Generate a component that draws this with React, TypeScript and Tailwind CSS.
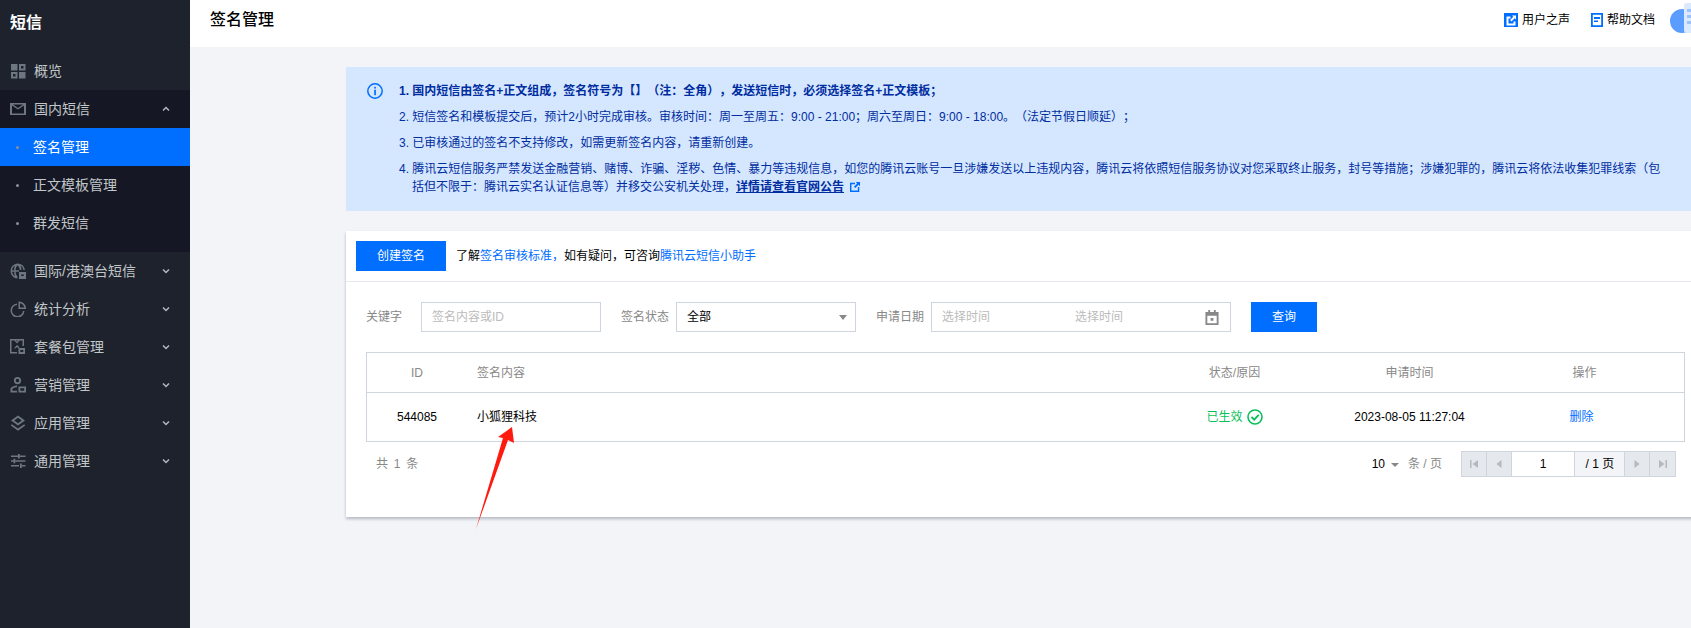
import type { ReactNode } from "react";

const fontStack = '"Liberation Sans", "Noto Sans CJK SC", sans-serif';
const iconFill = "#6e7681";

const navIcons: Record<string, ReactNode> = {
  overview: (
    <>
      <rect x="1" y="1" width="6.5" height="6.5" fill={iconFill} />
      <path fillRule="evenodd" d="M9 1h6.5v6.5H9zM11 3v2.5h2.5V3z" fill={iconFill} />
      <path fillRule="evenodd" d="M1 9h6.5v6.5H1zM3 11v2.5h2.5V11z" fill={iconFill} />
      <rect x="9" y="9" width="6.5" height="6.5" fill={iconFill} />
    </>
  ),
  mail: (
    <path
      fillRule="evenodd"
      d="M0 2h16v12H0zM2 4.6V12.5h12V4.6L8 8.6zM3 3.5l5 3.4 5-3.4z"
      fill={iconFill}
    />
  ),
  globe: (
    <>
      <path
        d="M7.500 0.500a7.500 7.500 0 0 0-7 7.500 7.500 7.500 0 0 0 7 7.500V13.500c-1-1-1.800-2.800-1.900-4.800H9v-1.400H5.600C5.700 5 6.500 3.200 7.500 2.200 8.500 3.200 9.700 5 9.800 7h1.600a8 8 0 0 0-1-4.500A6 6 0 0 1 13.500 7H15A7.500 7.500 0 0 0 7.500 0.500zM4.200 7.300H2a6 6 0 0 1 3-4.700A9 9 0 0 0 4.200 7.300zM4.200 8.700A9 9 0 0 0 5 13.400 6 6 0 0 1 2 8.700z"
        fill={iconFill}
      />
      <path fillRule="evenodd" d="M9 9h7v7H9zM11.200 11.500v1.600h2.600v-1.600z" fill={iconFill} />
    </>
  ),
  pie: (
    <>
      <path d="M7 2.500A7 7 0 1 0 14.500 10H13a5.500 5.500 0 1 1-6-6z" fill={iconFill} />
      <path
        fillRule="evenodd"
        d="M8.500 0.500A7 7 0 0 1 16 8H8.500zM10 2.200V6.500h4.300A5.500 5.500 0 0 0 10 2.200z"
        fill={iconFill}
      />
    </>
  ),
  pack: (
    <>
      <path
        fillRule="evenodd"
        d="M0 0h14v7h-1.500V1.500H9.700L7 4.500 4.300 1.500H1.500v11.500H7V14.500H0zM6 1.500L7 2.700 8 1.500zM7 6l-3 3.200h1.900L7 8l1.100 1h1V7.700z"
        fill={iconFill}
      />
      <path fillRule="evenodd" d="M8.500 9h6.500v6H8.500zM10.300 11v2h3v-2z" fill={iconFill} />
    </>
  ),
  user: (
    <>
      <path
        fillRule="evenodd"
        d="M7.500 0a3.600 3.600 0 1 1 0 7.200 3.600 3.600 0 0 1 0-7.200zM7.500 1.800a1.800 1.800 0 1 0 0 3.600 1.800 1.800 0 0 0 0-3.600z"
        fill={iconFill}
      />
      <path d="M0.500 15.500V12.500C0.500 10.500 2.500 9 7 8.500v1.700c-3 .3-4.700 1.200-4.700 2.400v1.100H7v1.800z" fill={iconFill} />
      <path fillRule="evenodd" d="M8.500 9.500h7.500v6H8.500zM10.300 11.300v2.400h3.900v-2.400z" fill={iconFill} />
    </>
  ),
  layers: (
    <>
      <path fillRule="evenodd" d="M8 0.500l7 5-7 5-7-5zM8 2.800L4.200 5.500 8 8.200l3.800-2.700z" fill={iconFill} />
      <path d="M1.800 9.200L8 13.600l6.200-4.400 1 1.300L8 15.700 0.800 10.500z" fill={iconFill} />
    </>
  ),
  sliders: (
    <path
      d="M1 2.500h7v1.500H1zM10 2.500h5.500v1.500H10zM8 1h1.800v4.500H8zM1 7.300h2.500v1.500H1zM5.500 7.300h10v1.500h-10zM3.500 5.800h1.800v4.500H3.500zM1 12.100h8v1.500H1zM12 12.100h3.500v1.500H12zM10 10.600h1.800v4.500H10z"
      fill={iconFill}
    />
  ),
};

function NavIcon({ name }: { name: string }) {
  return (
    <svg viewBox="0 0 16 16" className="size-4 shrink-0">
      {navIcons[name]}
    </svg>
  );
}

function Chevron({ up = false }: { up?: boolean }) {
  return (
    <svg viewBox="0 0 8 6" className="absolute left-[162px] top-[16px] h-[6px] w-[8px]">
      <polyline
        points={up ? "1,4.500 4,1.500 7,4.500" : "1,1.500 4,4.500 7,1.500"}
        fill="none"
        stroke="#b4b8bd"
        strokeWidth="1.500"
      />
    </svg>
  );
}

function NavRow({ icon, label, open }: { icon: string; label: string; open?: boolean }) {
  return (
    <div className="relative flex h-[38px] items-center gap-[8px] pl-[10px] text-[14px] text-[#c1c6c8]">
      <NavIcon name={icon} />
      <span>{label}</span>
      {open !== undefined && <Chevron up={open} />}
    </div>
  );
}

function SubRow({ label, active = false }: { label: string; active?: boolean }) {
  return (
    <div
      className={
        active
          ? "flex h-[38px] items-center pl-[16px] text-[14px] text-white bg-[#006eff]"
          : "flex h-[38px] items-center pl-[16px] text-[14px] text-[#c1c6c8]"
      }
    >
      <span className="mr-[14px] size-[3px] rounded-full bg-[#8a8f99]" />
      {label}
    </div>
  );
}

function Sidebar() {
  return (
    <aside className="w-[190px] shrink-0 bg-[#1e222d]">
      <div className="flex h-[52px] items-start pl-[10px] pt-[11px] text-[16px] leading-[24px] font-bold text-white">
        短信
      </div>
      <NavRow icon="overview" label="概览" />
      <div className="bg-[#151824] pb-[10px]">
        <NavRow icon="mail" label="国内短信" open />
        <SubRow label="签名管理" active />
        <SubRow label="正文模板管理" />
        <SubRow label="群发短信" />
      </div>
      <NavRow icon="globe" label="国际/港澳台短信" open={false} />
      <NavRow icon="pie" label="统计分析" open={false} />
      <NavRow icon="pack" label="套餐包管理" open={false} />
      <NavRow icon="user" label="营销管理" open={false} />
      <NavRow icon="layers" label="应用管理" open={false} />
      <NavRow icon="sliders" label="通用管理" open={false} />
    </aside>
  );
}

function TopBar() {
  return (
    <header className="relative flex h-[47px] shrink-0 items-center bg-white pl-[20px]">
      <h1 className="mb-[7px] text-[16px] leading-[24px] font-medium text-black">签名管理</h1>
      <div className="ml-auto mb-[7px] flex items-center pr-[36px] text-[12px] text-black">
        <svg viewBox="0 0 14 14" className="mr-[4px] size-[14px]">
          <rect width="14" height="14" fill="#006eff" />
          <path d="M2.500 3.500h4v2h-2v5h5v-2h2v4h-9z" fill="#fff" />
          <path d="M8 2.500h4v4l-1.300-1.300-3.200 3.200-1.400-1.400 3.200-3.200z" fill="#fff" />
        </svg>
        <span>用户之声</span>
        <svg viewBox="0 0 12 14" className="ml-[21px] mr-[4px] h-[14px] w-[12px]">
          <path fillRule="evenodd" d="M0 0h12v14H0zM1.800 1.800v10.400h8.400V1.800z" fill="#006eff" />
          <path d="M3 4h6v2H3zM3 7.500h4v1.500H3z" fill="#006eff" />
        </svg>
        <span>帮助文档</span>
      </div>
      {/* avatar, cut by the window edge */}
      <div className="absolute left-[1480px] top-[9px] size-[24px] rounded-full bg-[#5b9cff]" />
      <div className="absolute left-[1494px] top-[3px] flex h-[30px] w-[20px] flex-col gap-[3px] rounded-[3px] bg-[#dbe9ff] pt-[6px] pl-[3px]">
        <span className="h-[3px] w-[10px] bg-[#9cc2fb]" />
        <span className="h-[3px] w-[10px] bg-[#9cc2fb]" />
        <span className="h-[3px] w-[10px] bg-[#9cc2fb]" />
      </div>
    </header>
  );
}

function Notice() {
  return (
    <section className="flex bg-[#d5e7ff] py-[15px] pl-[21px] text-[12px] leading-[18px] text-[#002da0] [text-spacing-trim:space-all]">
      <svg viewBox="0 0 16 16" className="mt-px mr-[16px] size-4 shrink-0">
        <circle cx="8" cy="8" r="7.200" fill="none" stroke="#006eff" strokeWidth="1.500" />
        <rect x="7.200" y="3.800" width="1.700" height="1.700" fill="#006eff" />
        <rect x="7.200" y="6.700" width="1.700" height="5.500" fill="#006eff" />
      </svg>
      <div className="flex flex-col gap-[8px] whitespace-nowrap">
        <p className="font-bold">
          1. 国内短信由签名+正文组成，签名符号为【】（注：全角），发送短信时，必须选择签名+正文模板；
        </p>
        <p>
          2. 短信签名和模板提交后，预计2小时完成审核。审核时间：周一至周五：9:00 - 21:00；周六至周日：9:00 -
          18:00。（法定节假日顺延）；
        </p>
        <p>3. 已审核通过的签名不支持修改，如需更新签名内容，请重新创建。</p>
        <div>
          <p>
            4. 腾讯云短信服务严禁发送金融营销、赌博、诈骗、淫秽、色情、暴力等违规信息，如您的腾讯云账号一旦涉嫌发送以上违规内容，腾讯云将依照短信服务协议对您采取终止服务，封号等措施；涉嫌犯罪的，腾讯云将依法收集犯罪线索（包
          </p>
          <p className="flex items-center pl-[13px]">
            括但不限于：腾讯云实名认证信息等）并移交公安机关处理，
            <span className="font-bold underline">详情请查看官网公告</span>
            <svg viewBox="0 0 14 14" className="ml-[6px] size-[10px]">
              <path d="M0 1h7v2H2v9h9V7h2v7H0z" fill="#006eff" />
              <path d="M8 0h6v6l-2-2-4.500 4.500-2-2L10 2z" fill="#006eff" />
            </svg>
          </p>
        </div>
      </div>
    </section>
  );
}

const inputBox = "flex h-[30px] items-center border border-[#cfd5de] bg-white text-[12px]";
const filterLabel = "mr-[7px] w-[48px] text-[12px] text-[#888]";

function Filters() {
  return (
    <div className="flex items-center pt-[20px] pl-[20px]">
      <span className={filterLabel}>关键字</span>
      <div className={`${inputBox} mr-[20px] w-[180px] pl-[10px] text-[#bbb]`}>签名内容或ID</div>
      <span className={filterLabel}>签名状态</span>
      <div className={`${inputBox} mr-[20px] w-[180px] justify-between pr-[8px] pl-[10px] text-black`}>
        全部
        <span className="h-0 w-0 border-x-[4px] border-t-[5px] border-x-transparent border-t-[#888]" />
      </div>
      <span className={filterLabel}>申请日期</span>
      <div className={`${inputBox} mr-[20px] w-[300px] pl-[10px] text-[#bbb]`}>
        <span className="w-[133px]">选择时间</span>
        <span>选择时间</span>
        <svg viewBox="0 0 14 16" className="ml-auto mr-[11px] h-[15px] w-[14px]">
          <path
            fillRule="evenodd"
            d="M0 2h3V0h2v2h4V0h2v2h3v14H0zM2 6v8h10V6zM5.500 8.500h3v3h-3z"
            fill="#888"
          />
        </svg>
      </div>
      <button className="h-[30px] w-[66px] bg-[#006eff] text-[12px] text-white">查询</button>
    </div>
  );
}

const tableGrid = "grid grid-cols-[100px_680px_175px_175px_175px_12px] items-center text-[12px]";

function SignTable() {
  return (
    <div className="mt-[20px] ml-[20px] w-[1319px] border border-[#cfd5de]">
      <div className={`${tableGrid} h-[39px] text-[#888]`}>
        <span className="text-center">ID</span>
        <span className="pl-[10px]">签名内容</span>
        <span className="text-center">状态/原因</span>
        <span className="text-center">申请时间</span>
        <span className="text-center">操作</span>
      </div>
      <div className={`${tableGrid} h-[49px] border-t border-[#cfd5de] text-black`}>
        <span className="text-center">544085</span>
        <span className="pl-[10px]">小狐狸科技</span>
        <span className="flex items-center justify-center gap-[4px] text-[#0abf5b]">
          已生效
          <svg viewBox="0 0 16 16" className="size-4">
            <circle cx="8" cy="8" r="7" fill="none" stroke="#0abf5b" strokeWidth="1.600" />
            <polyline points="4.500,8 7.200,10.700 11.700,5.800" fill="none" stroke="#0abf5b" strokeWidth="1.800" />
          </svg>
        </span>
        <span className="text-center">2023-08-05 11:27:04</span>
        <span className="pr-[6px] text-center text-[#006eff]">删除</span>
      </div>
    </div>
  );
}

function PagerButton({ d }: { d: string }) {
  return (
    <span className="flex h-full w-[25px] items-center justify-center border-r border-[#cfd5de] bg-[#e5e8ed] last:border-r-0">
      <svg viewBox="0 0 10 10" className="size-[10px]">
        <path d={d} fill="#b4b8c0" />
      </svg>
    </span>
  );
}

function Pager() {
  return (
    <div className="mt-[9px] ml-[20px] flex h-[26px] w-[1319px] items-center pr-[9px] text-[12px]">
      <span className="pl-[10px] text-[#888] tracking-[1.200px]">共 1 条</span>
      <span className="ml-auto text-black">10</span>
      <span className="mt-[2px] ml-[6px] h-0 w-0 border-x-[4px] border-t-[4px] border-x-transparent border-t-[#888]" />
      <span className="ml-[9px] text-[#888]">条 / 页</span>
      <div className="ml-[19px] flex h-full w-[215px] border border-[#cfd5de]">
        <PagerButton d="M1 1h1.500v8H1zM9 1v8L3.500 5z" />
        <PagerButton d="M7.500 1v8L2.500 5z" />
        <span className="flex w-[64px] items-center justify-center border-r border-[#cfd5de] bg-white text-black">1</span>
        <span className="flex w-[50px] items-center justify-center border-r border-[#cfd5de] bg-[#f3f4f7] text-black">/ 1 页</span>
        <PagerButton d="M2.500 1v8L7.500 5z" />
        <PagerButton d="M1 1v8L6.500 5zM7.500 1H9v8H7.500z" />
      </div>
    </div>
  );
}

function SignCard() {
  return (
    <section className="mt-[20px] bg-white pb-[40px] shadow-[0_2px_3px_0_rgba(54,58,80,0.32)]">
      <div className="flex h-[51px] items-center border-b border-[#e5e8ed] pb-[1px] pl-[10px] text-[12px] text-black">
        <button className="mr-[10px] h-[30px] w-[90px] bg-[#006eff] text-white">创建签名</button>
        了解<span className="text-[#006eff]">签名审核标准，</span>如有疑问，可咨询
        <span className="text-[#006eff]">腾讯云短信小助手</span>
      </div>
      <Filters />
      <SignTable />
      <Pager />
    </section>
  );
}

export default function App() {
  return (
    <div
      className="relative flex h-screen w-full overflow-hidden bg-[#f2f4f8]"
      style={{ fontFamily: fontStack }}
    >
      <Sidebar />
      <main className="flex min-w-0 flex-1 flex-col">
        <TopBar />
        <div className="w-[1515px] pt-[20px] pl-[156px]">
          <Notice />
          <SignCard />
        </div>
      </main>
      {/* red annotation arrow drawn over the screenshot */}
      <svg className="pointer-events-none absolute left-[470px] top-[420px] h-[115px] w-[50px]" viewBox="0 0 50 115">
        <polygon points="6,109 33,18 28,17 42,7 44,23 38,20" fill="#ff1a10" />
      </svg>
    </div>
  );
}
